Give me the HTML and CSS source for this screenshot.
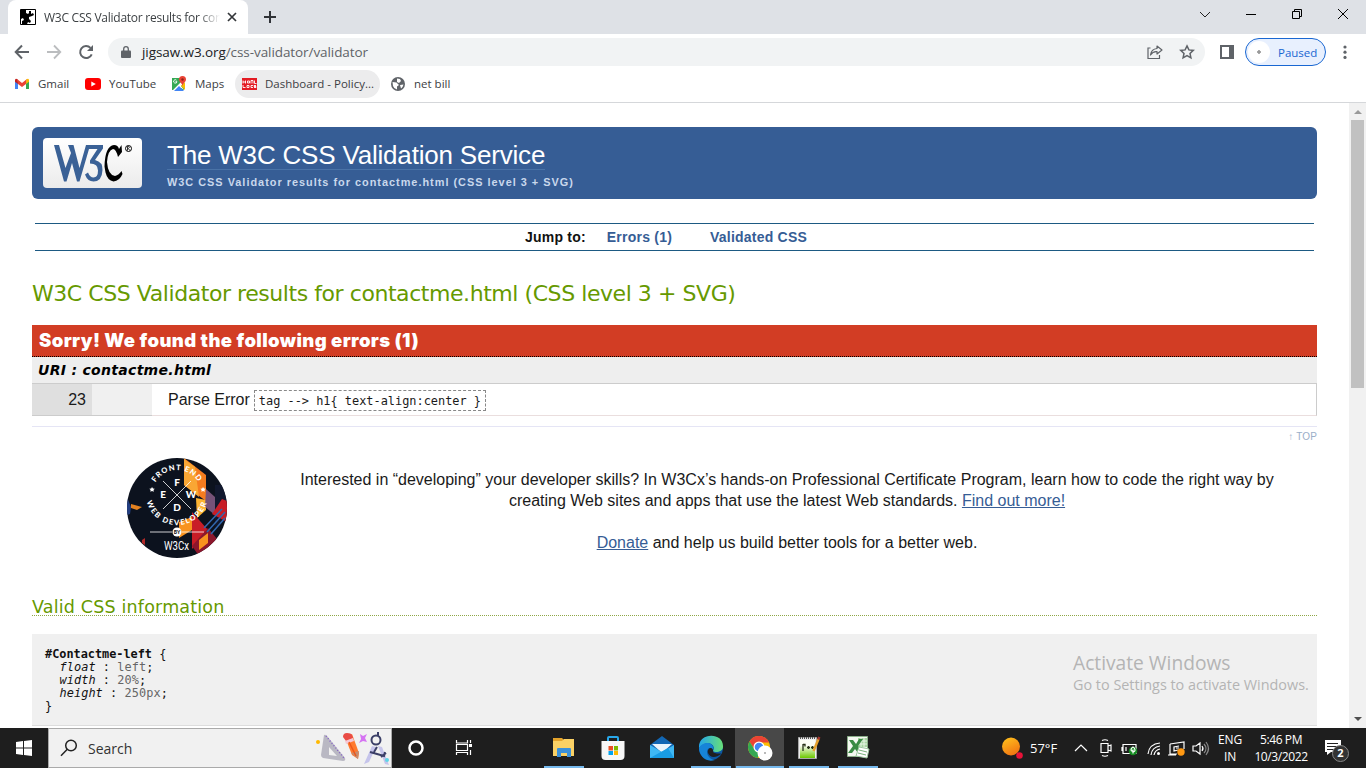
FILE: index.html
```html
<!DOCTYPE html>
<html lang="en">
<head>
<meta charset="utf-8">
<title>W3C CSS Validator results for contactme.html</title>
<link rel="stylesheet" href="styles.css">
</head>
<body>
<header class="tabstrip">
  <div class="tab">
    <svg class="tab-icon" width="16" height="16" viewBox="0 0 16 16"><path fill="#fff" stroke="#000" d="M.5.5h15v15H.5z"/><path d="M1 1h5v3l2 1 1-1V2h2v3l2-1 1 2-2 1-3 1v2l2 2-1 2-2-1-1 2H2v-3l2-1-1-2-2 1z"/></svg>
    <span class="tab-title">W3C CSS Validator results for con</span>
    <svg class="tab-close" width="10" height="10" viewBox="0 0 10 10"><path d="M1 1l8 8M9 1L1 9" stroke="#333639" stroke-width="1.7"/></svg>
  </div>
  <svg class="new-tab" width="12" height="12" viewBox="0 0 12 12"><path d="M6 0v12M0 6h12" stroke="#303338" stroke-width="2"/></svg>
  <div class="win-buttons">
    <svg width="12" height="12" viewBox="0 0 12 12" fill="none" stroke="#222"><path d="M1 4l5 5 5-5"/></svg>
    <svg width="12" height="12" viewBox="0 0 12 12" fill="none" stroke="#000"><path d="M1 6.5h10"/></svg>
    <svg width="12" height="12" viewBox="0 0 12 12" fill="none" stroke="#000"><path d="M1.500 3.500h7v7h-7zM3.500 3.500v-2h7v7h-2"/></svg>
    <svg width="12" height="12" viewBox="0 0 12 12" fill="none" stroke="#000"><path d="M1 1l10 10M11 1L1 11"/></svg>
  </div>
</header>
<div class="toolbar">
  <svg class="nav-icon" width="16" height="16" viewBox="0 0 16 16" fill="none" stroke="#5f6368" stroke-width="2"><path d="M15 8H2M8 1.500L1.700 8 8 14.500"/></svg>
  <svg class="nav-icon" width="16" height="16" viewBox="0 0 16 16" fill="none" stroke="#bbbdbf" stroke-width="1.800"><path d="M1 8h13M8 1.500L14.300 8 8 14.500"/></svg>
  <svg class="nav-icon" width="16" height="16" viewBox="0 0 16 16"><path d="M13.700 10.300A6 6 0 1 1 12.500 3.900" fill="none" stroke="#5f6368" stroke-width="2"/><path d="M15 1v6H9z" fill="#5f6368"/></svg>
  <div class="omnibox">
    <svg width="10" height="12" viewBox="0 0 10 12"><path d="M1 4.500h8q1 0 1 1V11q0 1-1 1H1q-1 0-1-1V5.500q0-1 1-1z" fill="#5f6368"/><path d="M2.700 5V3a2.300 2.300 0 0 1 4.600 0v2" fill="none" stroke="#5f6368" stroke-width="1.300"/></svg>
    <span class="url"><b>jigsaw.w3.org</b>/css-validator/validator</span>
    <svg class="share" width="16" height="16" viewBox="0 0 16 16" fill="none" stroke="#5f6368" stroke-width="1.200"><path d="M3.500 4H1v10.500h11.500V11"/><path d="M10 2L15 6l-5 4V7.700Q6 7.200 3.500 11q.800-6 6.500-6.500z" stroke-linejoin="round"/></svg>
    <svg width="16" height="16" viewBox="0 0 16 16" fill="none" stroke="#5f6368" stroke-width="1.500"><path d="M8 1.900l1.900 4 4.400.500-3.300 3 .900 4.400L8 11.600l-3.900 2.200.900-4.400-3.300-3 4.400-.500z"/></svg>
  </div>
  <svg class="sidepanel" width="14" height="14" viewBox="0 0 14 14"><path fill="#5f6368" fill-rule="evenodd" d="M0 0h14v14H0zM2 2v10h7V2z"/></svg>
  <div class="paused"><i class="avatar"></i><span>Paused</span></div>
  <svg class="kebab" width="4" height="16" viewBox="0 0 4 16" fill="#5f6368"><circle cx="2" cy="3" r="1.600"/><circle cx="2" cy="8.200" r="1.600"/><circle cx="2" cy="13.400" r="1.600"/></svg>
</div>
<nav class="bookmarks">
  <span class="bm bm-gmail"><svg width="16" height="16" viewBox="0 0 16 16"><path fill="#4285f4" d="M1 4v9h3V6z"/><path fill="#34a853" d="M15 4v9h-3V6z"/><path fill="#ea4335" d="M3 3l5 4 5-4-1 5-4 3-4-3z"/><path fill="#c5221f" d="M1 3.800Q1.500 2 3.500 3.200L4 8 1 5.700z"/><path fill="#fbbc04" d="M15 3.800Q14.500 2 12.500 3.200L12 8l3-2.300z"/></svg><span>Gmail</span></span>
  <span class="bm bm-yt"><svg width="16" height="16" viewBox="0 0 16 16"><rect y="2" width="16" height="12" rx="3" fill="#f00"/><path d="M6.300 5.400v5.200L10.800 8z" fill="#fff"/></svg><span>YouTube</span></span>
  <span class="bm bm-maps"><svg width="16" height="16" viewBox="0 0 16 16"><path fill="#34a853" d="M1 2h12v12H1z"/><path fill="#fff" d="M2 14L12 4l2 2-4 4 3 4-3-2-3 2z"/><path fill="#4285f4" d="M3 15l5-5 5 5z"/><path fill="#fbbc04" d="M14 6v8l-4-4z"/><path d="M5.500 4.200a1.700 1.700 0 1 0 .500 1.500H4.500" fill="none" stroke="#fff" stroke-width=".9"/><path fill="#ea4335" d="M11.500 0a3.500 3.500 0 0 1 3.500 3.500C15 6 12 7 11.500 10 11 7 8 6 8 3.500A3.500 3.500 0 0 1 11.500 0z"/><circle cx="11.500" cy="3.500" r="1.200" fill="#8e241b"/></svg><span>Maps</span></span>
  <span class="bm bm-dash"><svg width="16" height="16" viewBox="0 0 16 16"><path fill="#e31b23" d="M1 2h15v12H1z"/><path d="M2 6h3M2 4.500v3M4.500 4.500v3M6.500 5v2h2V5zM10 7.500v-3h2v3M13.500 4.500v3h2M2 9v2.500h2.500M6 9.500h2v2H6zM12 9.500h-2v2h2M15 9.500h-2v1h2v1h-2" fill="none" stroke="#fff" stroke-width=".9"/></svg><span>Dashboard - Policy...</span></span>
  <span class="bm bm-net"><svg width="16" height="16" viewBox="0 0 16 16"><circle cx="8" cy="8" r="7" fill="#5f6368"/><path fill="#fff" d="M2.500 6l4 .500L9 9 7 10.500v3Q4 13 3 10zM7 2.500l3 .500 1 2-2 2-2-1zM10 9l3.500-.500Q13 11 11 12.500z"/></svg><span>net bill</span></span>
</nav>
<div class="viewport">
  <main class="page">
    <div class="banner">
      <div class="logo"><svg width="99" height="50" viewBox="0 0 99 50"><g fill="#3a6196"><path d="M11 7h5l6.500 23L28 15l-3-8h5.500l6 23L43 7h17v3.500L52 22q8 2 7.500 10Q59 43.500 50.500 43.500q-6 0-8.500-7l3-2q2 5 5.500 5 4.500 0 4.500-7 0-7-8-7v-3l7.500-11.500H46L36.500 43.500H34L29 25l-5.500 18.500H21z"/></g><path d="M78.500 7l.500 7-4 5q-2-8-5-8-5 1-6 13 1 13 8 14 4-1 6.500-5l1 3q-3 7-9 7.500-6-1-8-9l-1-6Q62 8 71 7q4 0 5 4z"/><circle cx="85.500" cy="10.500" r="3" fill="none" stroke="#000"/><path d="M84.500 12.500v-4h1.200q1.300 1-.2 2l1.200 2" fill="none" stroke="#000" stroke-width=".8"/></svg></div>
      <div class="banner-text"><h1>The W3C CSS Validation Service</h1><p>W3C CSS Validator results for contactme.html (CSS level 3 + SVG)</p></div>
    </div>
    <div class="jumpbar"><strong>Jump to:</strong><a class="j-errors">Errors (1)</a><a class="j-css">Validated CSS</a></div>
    <h2 class="result-title"><span>W3C CSS Validator results for contactme.html (CSS level 3 + SVG)</span></h2>
    <h3 class="error-title"><span>Sorry! We found the following errors (1)</span></h3>
    <h4 class="uri"><span>URI : contactme.html</span></h4>
    <div class="error-row"><span class="line-no">23</span><span class="context"></span><div class="message"><span class="parse">Parse Error</span><code>tag --&gt; h1{ text-align:center }</code></div></div>
    <div class="top-link"><span>↑ TOP</span></div>
    <section class="promo">
      <svg class="seal" width="100" height="100" viewBox="0 0 100 100">
        <defs><clipPath id="disc"><circle cx="50" cy="50" r="50"/></clipPath><path id="arc-top" d="M25 37A25 25 0 0 1 75 37"/><path id="arc-low" d="M21.500 24A31 31 0 1 0 78.500 24"/></defs>
        <g clip-path="url(#disc)"><path fill="#0c121e" d="M0 0h100v100H0z"/><path fill="#f57c1f" d="M57 0l22 17v26L57 27z"/><path fill="#f9a634" d="M57 1l11 8 4 30-15-12z"/><path fill="#fdb432" d="M69 40l10 2v10l-9 8z"/><path fill="#765278" d="M79 31l9 8v18l-10-8z"/><path fill="#11182e" d="M88 27h12v35l-12 6z"/><path fill="#233f82" d="M0 39l4 10-1 7-3 1z"/><path fill="#e28120" d="M4 46l11 3-5 3-6-2z"/><path fill="#b22a28" d="M15 82l3-2v7l-3-2z"/><path fill="#f8931f" d="M52 64l13-5v13l-13 8z"/><path fill="#c81d27" d="M65 54l16 18-16 19zM95 41l5 2v21l-15-8z"/><path fill="#8c172c" d="M81 70l9 11-18 17-7-10z"/><path fill="#f8931f" d="M72 82l9-7v10l-9 7z"/><path d="M80 74l18-20M84 76l14-16M77 70l18-19" stroke="#3167af" stroke-width="1.500"/></g>
        <path d="M36 23l28 28M64 23L36 51M23 74h22M55 74h22" stroke="#fff" stroke-width=".8"/>
        <g fill="#fff" font-family="Lato" font-weight="900" text-anchor="middle"><text x="50" y="28" font-size="10">F</text><text x="36" y="40" font-size="10">E</text><text x="64" y="40" font-size="10">W</text><text x="50" y="53" font-size="10">D</text></g>
        <g fill="#fff" font-family="Lato" font-weight="900" font-size="7.500" text-anchor="middle"><text letter-spacing="1"><textPath href="#arc-top" startOffset="50%">FRONT END</textPath></text><text letter-spacing="1.500"><textPath href="#arc-low" startOffset="50%">WEB DEVELOPER</textPath></text></g>
        <path d="M25 29l1 1.500 1.800.200-1.300 1.300.300 1.800-1.800-.900-1.600.900.200-1.800-1.300-1.300 1.900-.200zM76 29l1 1.500 1.800.200-1.300 1.300.300 1.800-1.800-.900-1.600.900.200-1.800-1.300-1.300 1.900-.200z" fill="#fff"/>
        <circle cx="50" cy="74" r="4.500" fill="#fff"/><text x="50" y="76" text-anchor="middle" font-family="Lato" font-weight="900" font-size="5" fill="#111">BY</text>
        <text x="37" y="92" font-family="Roboto" font-size="12.500" fill="#fff" textLength="25" lengthAdjust="spacingAndGlyphs">W3Cx</text>
      </svg>
      <div class="promo-text">
        <p class="p1">Interested in “developing” your developer skills? In W3Cx’s hands-on Professional Certificate Program, learn how to code the right way by</p>
        <p class="p2">creating Web sites and apps that use the latest Web standards. <a>Find out more!</a></p>
        <p class="donate"><a>Donate</a> and help us build better tools for a better web.</p>
      </div>
    </section>
    <h3 class="valid-title"><span>Valid CSS information</span></h3>
    <pre class="css-code"><b>#Contactme-left</b> {
  <i>float</i> : <em>left</em>;
  <i>width</i> : <em>20%</em>;
  <i>height</i> : <em>250px</em>;
}</pre>
  </main>
  <aside class="scrollbar"><i class="up"></i><i class="thumb"></i><i class="down"></i></aside>
  <div class="watermark"><p class="wm-title">Activate Windows</p><p class="wm-sub">Go to Settings to activate Windows.</p></div>
</div>
<footer class="taskbar">
  <div class="start"><svg width="16" height="16" viewBox="0 0 16 16" fill="#fff"><path d="M0 2l7-1v6.500H0zM8 .900L16 0v7.500H8zM0 8.500h7V15l-7-1zM8 8.500h8V16l-8-1z"/></svg></div>
  <div class="search">
    <svg width="18" height="18" viewBox="0 0 18 18" fill="none" stroke="#222" stroke-width="1.500"><circle cx="11" cy="6.500" r="5.300"/><path d="M7.300 10.300L1 16.700"/></svg>
    <span>Search</span>
    <svg class="doodle" width="76" height="36" viewBox="314 730 76 36"><circle cx="317" cy="742" r="2" fill="#ffb900"/><path d="M323 735q1-1 3 1l18 22q1 3-2 3l-20-3q-2-1-2-3z" fill="#b9b8c3"/><path d="M328 747l8 9-8-1z" fill="#f0f0f0"/><path d="M325 736l18 22" stroke="#8661c5" stroke-dasharray="1 2" stroke-width="1.500"/><path d="M344 737l7-3 7 19-1 6-6-4z" fill="#ff7a2f"/><path d="M342 737q0-4 4-4t5 2l1 3-7 3z" fill="#e94b45"/><path d="M344 741l8-3 1 3-8 3z" fill="#f5c8d7"/><path d="M350 753l8-2-1 8z" fill="#c68d70"/><path d="M348 742l7 14" stroke="#ed571c" stroke-width="1.500"/><path d="M359 734l3 2 4-2-2 4 2 4-4-1-4 2 2-4z" fill="#d573f2"/><path d="M371 746l4 1-7 15-5 2zM377 746l4 1 7 18-4-1z" fill="#c5c4eb"/><g stroke="#3c4068" fill="none" stroke-width="2"><circle cx="375" cy="740" r="4.500"/><path d="M377 736v-4M376 747l-3 5M369 752l14 4 1-4M380 757l5-4"/></g><circle cx="386" cy="760" r="2" fill="#5fd5e8"/></svg>
  </div>
  <svg class="tray-art" width="88" height="40" viewBox="392 728 88 40"><circle cx="416" cy="748" r="6.500" fill="none" stroke="#fff" stroke-width="2.500"/><path d="M456.500 740v3h11v-3M456.500 755v-2.500h11v2.500M456.500 744.500h11v6h-11zM470.500 740v3M470.500 750v5" fill="none" stroke="#fff" stroke-width="1.200"/><path d="M469 744h3v3h-3z" fill="#fff"/></svg>
  <div class="apps">
    <div class="app running"><svg width="26" height="26" viewBox="0 0 26 26"><path fill="#e4a32b" d="M2 3h9l2 2-2 3H2z"/><path fill="#fad165" d="M2 6h9l2-2h10v17H2z"/><path fill="#3b91da" d="M6 14q0-1 1-1h12q1 0 1 1v8h-4v-4h-6v4H6z"/></svg></div>
    <div class="app"><svg width="26" height="26" viewBox="0 0 26 26"><path d="M8 7V3q0-1 1-1h8q1 0 1 1v4" fill="none" stroke="#28a8ea" stroke-width="2"/><path fill="#f7f7f7" d="M1.500 6h23v15q0 4-4 4h-15q-4 0-4-4z"/><path fill="#e94f25" d="M8.500 11H13v4.500H8.500z"/><path fill="#7fba00" d="M14 11h4v4.500h-4z"/><path fill="#00a4ef" d="M8.500 16H13v4H8.500z"/><path fill="#ffb900" d="M14 16h4v4h-4z"/></svg></div>
    <div class="app"><svg width="26" height="26" viewBox="0 0 26 26"><path fill="#1267b4" d="M1 10L13 1l12 9v5H1z"/><path fill="#e9f4fc" d="M3 9h20l-10 9z"/><path fill="#3fb8f4" d="M1 10l12 7 12-7v13H1z"/><path fill="#199ce4" d="M1 23l18-10 6 10z"/></svg></div>
    <div class="app running"><svg width="26" height="26" viewBox="0 0 26 26"><defs><linearGradient id="edge-g"><stop stop-color="#24a6e9"/><stop offset="1" stop-color="#68df78"/></linearGradient></defs><circle cx="13" cy="13" r="12" fill="#0c59a4"/><path d="M1 13C0-3 26-3 25 12c0 5-8 6-10 4 4-7-7-12-14-3z" fill="url(#edge-g)"/><path d="M1 13c4-8 16-6 14 2-1-3-6-3-6 2 0 4 4 8 8 8C7 28 1 20 1 13z" fill="#1684d8"/><path d="M15 15c-2-4-6-1-5 3 2 5 8 5 13 1 0-1-4 0-6-1-2 0-2-2-2-3z" fill="#202020"/></svg></div>
    <div class="app running active"><svg width="26" height="26" viewBox="0 0 26 26"><circle cx="12" cy="12" r="11" fill="#fbbc05"/><path fill="#ea4335" d="M2.500 6.500A11 11 0 0 1 22 7.500H12l-5 6z"/><path fill="#34a853" d="M2.500 6.500l5 8 6 3-3 5.500A11 11 0 0 1 2.500 6.500z"/><circle cx="12" cy="12" r="5.500" fill="#fff"/><circle cx="12" cy="12" r="4.300" fill="#4285f4"/><circle cx="18" cy="18" r="7.500" fill="#fff"/><path d="M17.500 17h1v2h-1z" fill="#777"/></svg></div>
    <div class="app running"><svg width="26" height="26" viewBox="0 0 26 26"><defs><linearGradient id="note-g" x2="0" y2="1"><stop offset=".3" stop-color="#fbfdf5"/><stop offset="1" stop-color="#6cc800"/></linearGradient></defs><path fill="#eee" stroke="#aaa" d="M2.500 2.500h18v21h-18z"/><path fill="url(#note-g)" d="M4 5h15v18H4z"/><path d="M4 3h15" stroke="#555" stroke-width="2" stroke-dasharray="1 1"/><path d="M7 9v7M7 9.500h2v2M11 12.500h3M15 12.500h3M12.500 11v3M16.500 11v3" stroke="#263015" fill="none" stroke-width="1.300"/><path d="M22.500 4l-5 12" stroke="#e6a12c" stroke-width="2.500"/><path d="M23.300 2l-1 2.500" stroke="#a33530" stroke-width="2.500"/></svg></div>
    <div class="app running"><svg width="26" height="26" viewBox="0 0 26 26"><path fill="#f4f8f1" stroke="#8bae89" d="M2.500 1.500h20v20h-20z"/><path fill="#a8d4a2" d="M13 3h9v9h-9z"/><path d="M16 3v9M19 3v9M13 6h9M13 9h9" stroke="#e7f3e5"/><path fill="#398b43" d="M4 5h4l3 4 3-5h4l-5 7 5 7h-5l-3-4-3 4H3l5-7z"/><path fill="#fff" stroke="#9cc69e" d="M14 12l10 2-2 9-11-2z"/><path d="M14 15l8 2M13 18l8 2" stroke="#79b27c"/></svg></div>
  </div>
  <div class="tray">
    <svg class="weather" width="22" height="22" viewBox="0 0 22 22"><defs><linearGradient id="sun" x2=".5" y2="1"><stop stop-color="#ffc51d"/><stop offset="1" stop-color="#f27812"/></linearGradient></defs><circle cx="10" cy="9.500" r="9" fill="url(#sun)"/><circle cx="18.500" cy="18.500" r="3.300" fill="#e81238"/></svg>
    <span class="temp">57°F</span>
    <svg class="sys" width="142" height="40" viewBox="1070 728 142 40" fill="none" stroke="#fff" stroke-width="1.200"><path d="M1075 751l6-6 6 6"/><path d="M1101 743.500h7v9h-7zM1108 746l3-1v6l-3-1M1102 740.500q3-1.500 6 0M1102 755.500q3 1.500 6 0"/><path d="M1124 744.500h12v9h-13v-9zM1122 747v4M1126 747v4"/><circle cx="1133" cy="751" r="4.300" fill="#168b22" stroke="none"/><path d="M1133 753.500v-4M1131 750q0-2 2-3 2 1 2 3t-2 1.500-2-1.500"/><path d="M1148 754q1-10 12-11M1151 755q1-8 9-9M1154 755q1-5 6-6"/><circle cx="1158.500" cy="753.500" r="1.500" fill="#fff" stroke="none"/><path d="M1170 744l14-2v7M1170 744v10h7M1168 755h8M1179 746l-5 1v4l4-1M1176 748h3"/><circle cx="1181" cy="752" r="3.700" fill="#ff9913" stroke="none"/><path d="M1193 746h3l4-3v11l-4-3h-3zM1202 746q2 2.500 0 5"/><path d="M1204 744q4 4.500 0 9M1206 742q5 6.500 0 13" stroke="#888"/></svg>
    <div class="lang"><span>ENG</span><span>IN</span></div>
    <div class="clock"><span class="time">5:46 PM</span><span class="date">10/3/2022</span></div>
    <div class="notice"><svg width="18" height="16" viewBox="0 0 18 16"><path fill="#fff" d="M1 0h16v12H7l-4 3v-3H1z"/><path d="M3 3.500h11M3 6.500h11M3 9.500h7" stroke="#222"/></svg><b>2</b></div>
  </div>
</footer>
</body>
</html>
```
FILE: styles.css
```css
* { box-sizing: border-box; }
body { margin: 0; width: 1366px; height: 768px; overflow: hidden; display: flex; flex-direction: column; background: #fff; font-family: "Open Sans", "Noto Sans", sans-serif; font-size: 12px; color: #3c4043; }
h1, h2, h3, h4, p, pre { margin: 0; }
svg { display: block; flex: none; }
span { white-space: nowrap; }

.tabstrip { height: 34px; flex: none; background: #dee1e6; display: flex; align-items: center; padding-left: 8px; }
.tab { width: 240px; height: 34px; background: #fff; border-radius: 8px 8px 0 0; display: flex; align-items: center; padding-left: 12px; }
.tab-title { width: 176px; flex: none; margin-left: 8px; overflow: hidden; font-size: 12px; letter-spacing: -.25px; mask-image: linear-gradient(90deg, #000 88%, transparent); }
.tab-close { margin-left: 7px; }
.new-tab { margin-left: 16px; }
.win-buttons { margin-left: auto; display: flex; gap: 34px; padding: 0 17px 6px 0; }

.toolbar { height: 36px; flex: none; display: flex; align-items: center; padding-left: 14px; }
.nav-icon { margin-right: 16px; }
.omnibox { margin-left: -2px; width: 1097px; height: 28px; border-radius: 14px; background: #f1f3f4; display: flex; align-items: center; padding: 0 10px 0 13px; color: #5f6368; }
.url { margin-left: 11px; font-size: 13.5px; letter-spacing: -.08px; }
.url b { font-weight: 400; color: #202124; }
.share { margin-left: auto; margin-right: 16px; }
.sidepanel { margin-left: 15px; }
.paused { margin-left: 11px; width: 81px; height: 28px; border: 1px solid #1967d2; border-radius: 14px; background: #e8f0fe; color: #1967d2; display: flex; align-items: center; padding-left: 2px; gap: 8px; }
.paused span { font-size: 11.5px; }
.avatar { width: 22px; height: 22px; border-radius: 50%; background: radial-gradient(#999 0 1.5px, #fff 2px); }
.kebab { margin-left: 17px; }

.bookmarks { height: 33px; flex: none; display: flex; align-items: flex-start; border-bottom: 1px solid #d5d7da; padding-left: 14px; }
.bm { height: 28px; display: flex; align-items: center; gap: 8px; margin-right: 17px; font-size: 11.5px; }
.bm span { padding-bottom: 1px; }
.bm-gmail { width: 54px; }
.bm-yt { width: 70px; }
.bm-maps { width: 52px; margin-right: 11px; }
.bm-maps svg { margin-left: -1px; }
.bm-dash { width: 145px; background: #ececed; border-radius: 14px; padding-left: 6px; margin-right: 10px; }

.viewport { height: 625px; flex: none; display: flex; position: relative; overflow: hidden; color: #1a1a1a; font-family: "Liberation Sans", Arial, sans-serif; }
.page { width: 1349px; padding: 24px 32px 0; flex: none; }
.banner { height: 72px; border-radius: 6px; background: #365d95; display: flex; padding: 11px; }
.logo { width: 99px; height: 50px; border-radius: 4px; background: linear-gradient(#fff, #ebebeb); }
.banner-text { margin-left: 25px; }
.banner h1 { display: inline-block; height: 32px; line-height: 34px; font-size: 26px; font-weight: 400; letter-spacing: -.19px; color: #fff; border-bottom: 1px solid #4a73a7; }
.banner p { line-height: 13px; margin-top: 6px; font-size: 10.9px; font-weight: 700; letter-spacing: 1px; color: #c9d8ec; }
.jumpbar { margin: 24px 3px 0; height: 28px; border: solid #1d5a83; border-width: 1px 0; display: flex; justify-content: center; line-height: 26px; font-size: 14px; letter-spacing: .22px; color: #111; padding-right: 17px; }
.jumpbar a { font-weight: 700; color: #365d95; }
.j-errors { margin-left: 21px; }
.j-css { margin-left: 38px; }
.result-title { margin-top: 27px; height: 31px; color: #690; font: 400 22px/32px "DejaVu Sans", Verdana, sans-serif; letter-spacing: -.44px; }
.error-title { margin-top: 16px; height: 32px; padding-left: 7px; background: #d23d24; color: #fff; border-bottom: 1px dotted #000; font: 900 18.5px/31px Inter, sans-serif; letter-spacing: .38px; }
.uri { height: 27px; padding-left: 6px; background: #eee; border-bottom: 1px solid #ccc; color: #000; font: italic 700 14px/26px "DejaVu Sans", Verdana, sans-serif; letter-spacing: .3px; }
.error-row { height: 32px; display: flex; font-size: 16px; }
.line-no { width: 60px; background: #dfdfdf; text-align: right; padding-right: 6px; line-height: 31px; border-bottom: 1px solid #ccc; }
.context { width: 60px; background: #f0f0f0; border-bottom: 1px solid #ccc; }
.message { flex: 1; display: flex; padding-left: 16px; line-height: 31px; border-right: 1px solid #ccc; border-bottom: 1px solid #fdd; border-bottom-color: #eadede; }
code { margin: 6px 0 0 4px; height: 21px; line-height: 20px; padding: 0 4px; border: 1px dashed #888; font-family: "DejaVu Sans Mono", monospace; font-size: 11.92px; white-space: pre; }
.top-link { margin-top: 10px; height: 20px; border-top: 1px solid #e5e5f5; text-align: right; font-size: 10px; line-height: 20px; color: #9aaec8; letter-spacing: .15px; }
.promo { margin-top: 12px; padding-bottom: 1px; display: flex; }
.seal { margin-left: 95px; }
.promo-text { width: 1060px; margin: 11px 0 0 30px; text-align: center; font-size: 16px; line-height: 21px; white-space: nowrap; }
.promo-text a { color: #365d95; text-decoration: underline; }
.donate { margin-top: 21px; }
.valid-title { margin-top: 36px; height: 21px; color: #690; border-bottom: 1px dotted #8fa747; font: 400 17.5px/24px "DejaVu Sans", Verdana, sans-serif; letter-spacing: .18px; }
.css-code { margin-top: 18px; height: 92px; background: #f0f0f0; border-bottom: 1px solid #ddd; padding: 14px 13px 0; color: #111; font: 11.88px/13px "DejaVu Sans Mono", monospace; letter-spacing: .08px; }
.css-code b { letter-spacing: -.02px; }
.css-code em { font-style: normal; color: #666; }
.scrollbar { width: 17px; background: #f1f1f1; display: flex; flex-direction: column; align-items: center; }
.up { margin-top: 7px; border: solid transparent; border-width: 0 4px 4px; border-bottom-color: #999; }
.thumb { margin-top: 6px; width: 13px; height: 268px; background: #c1c1c1; }
.down { margin: auto 0 7px; border: solid transparent; border-width: 4px 4px 0; border-top-color: #505050; }
.watermark { position: absolute; left: 1073px; top: 547px; color: #b4b4b4; font-family: "Open Sans", sans-serif; white-space: nowrap; }
.wm-title { font-size: 19.2px; line-height: 25px; }
.wm-sub { font-size: 14.4px; line-height: 20px; }

.taskbar { height: 40px; flex: none; background: #1e1e1e; display: flex; color: #fff; }
.start { width: 48px; display: flex; align-items: center; justify-content: center; }
.search { width: 344px; border: 1px solid #aaa; background: #f1f1f1; color: #333; display: flex; align-items: center; padding-left: 11px; }
.search span { margin-left: 10px; font-size: 14px; }
.doodle { margin-left: auto; }
.apps { display: flex; padding-left: 59px; }
.app { width: 49px; height: 40px; display: flex; flex-direction: column; align-items: center; padding-top: 7px; }
.app::after { content: ""; width: 40px; height: 2px; margin-top: 5px; }
.running::after { background: #76b9ed; }
.active { background: #484848; }
.active::after { width: 48px; }
.tray { flex: 1; display: flex; align-items: center; position: relative; justify-content: flex-end; font-size: 12px; }
.temp { width: 40px; margin-left: 7px; font-size: 13px; }
.lang, .clock { display: flex; flex-direction: column; align-items: center; line-height: 17px; letter-spacing: -.1px; }
.clock { letter-spacing: -.4px; }
.lang { width: 36px; }
.clock { width: 66px; }
.notice { width: 42px; position: relative; margin-left: 10px; }
.notice b { position: absolute; left: 8px; top: 5px; width: 17px; height: 17px; border-radius: 50%; border: 1px solid #888; background: #333; text-align: center; font-size: 11px; line-height: 14px; }
```
